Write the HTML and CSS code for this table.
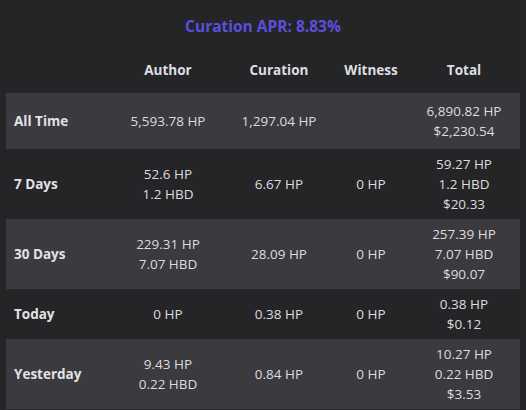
FILE: index.html
```html
<!DOCTYPE html>
<html>
<head>
<meta charset="utf-8">
<link rel="stylesheet" href="styles.css">
</head>
<body>
<div class="page">
  <h1 class="title">Curation APR: 8.83%</h1>
  <table class="stats">
    <colgroup>
      <col class="c-label"><col class="c-author"><col class="c-curation"><col class="c-witness"><col class="c-total">
    </colgroup>
    <thead>
      <tr><th></th><th>Author</th><th>Curation</th><th>Witness</th><th>Total</th></tr>
    </thead>
    <tbody>
      <tr class="alt first"><td class="label">All Time</td><td>5,593.78 HP</td><td>1,297.04 HP</td><td></td><td>6,890.82 HP<br>$2,230.54</td></tr>
      <tr><td class="label">7 Days</td><td>52.6 HP<br>1.2 HBD</td><td>6.67 HP</td><td>0 HP</td><td>59.27 HP<br>1.2 HBD<br>$20.33</td></tr>
      <tr class="alt"><td class="label">30 Days</td><td>229.31 HP<br>7.07 HBD</td><td>28.09 HP</td><td>0 HP</td><td>257.39 HP<br>7.07 HBD<br>$90.07</td></tr>
      <tr><td class="label">Today</td><td>0 HP</td><td>0.38 HP</td><td>0 HP</td><td>0.38 HP<br>$0.12</td></tr>
      <tr class="alt"><td class="label">Yesterday</td><td>9.43 HP<br>0.22 HBD</td><td>0.84 HP</td><td>0 HP</td><td>10.27 HP<br>0.22 HBD<br>$3.53</td></tr>
    </tbody>
  </table>
</div>
</body>
</html>
```

FILE: styles.css
```css
html, body {
  margin: 0;
  padding: 0;
  background: #252528;
}
body {
  font-family: "Open Sans", "Noto Sans", sans-serif;
  color: #dcdcdf;
  font-size: 13.5px;
}
.page {
  padding: 0 6px;
}
.title {
  margin: 0;
  padding-top: 15px;
  height: 35px;
  line-height: 22px;
  font-size: 15.5px;
  font-weight: 700;
  text-align: center;
  color: #5a4fdc;
}
.stats {
  width: 514px;
  border-collapse: collapse;
  table-layout: fixed;
}
.c-label { width: 106px; }
.c-author { width: 112px; }
.c-curation { width: 110px; }
.c-witness { width: 74px; }
.c-total { width: 112px; }
.stats th {
  font-weight: 700;
  color: #dedee2;
  line-height: 20px;
  padding: 10px 0 13px;
  text-align: center;
}
.stats td {
  line-height: 20px;
  padding: 5px 0;
  text-align: center;
  vertical-align: middle;
}
.stats td.label {
  text-align: left;
  padding-left: 8px;
  font-weight: 700;
  color: #e2e2e6;
}
.stats tr.alt td {
  background: #3b3a3f;
}
.stats tr.first td {
  padding-top: 8px;
  padding-bottom: 8px;
}
```
